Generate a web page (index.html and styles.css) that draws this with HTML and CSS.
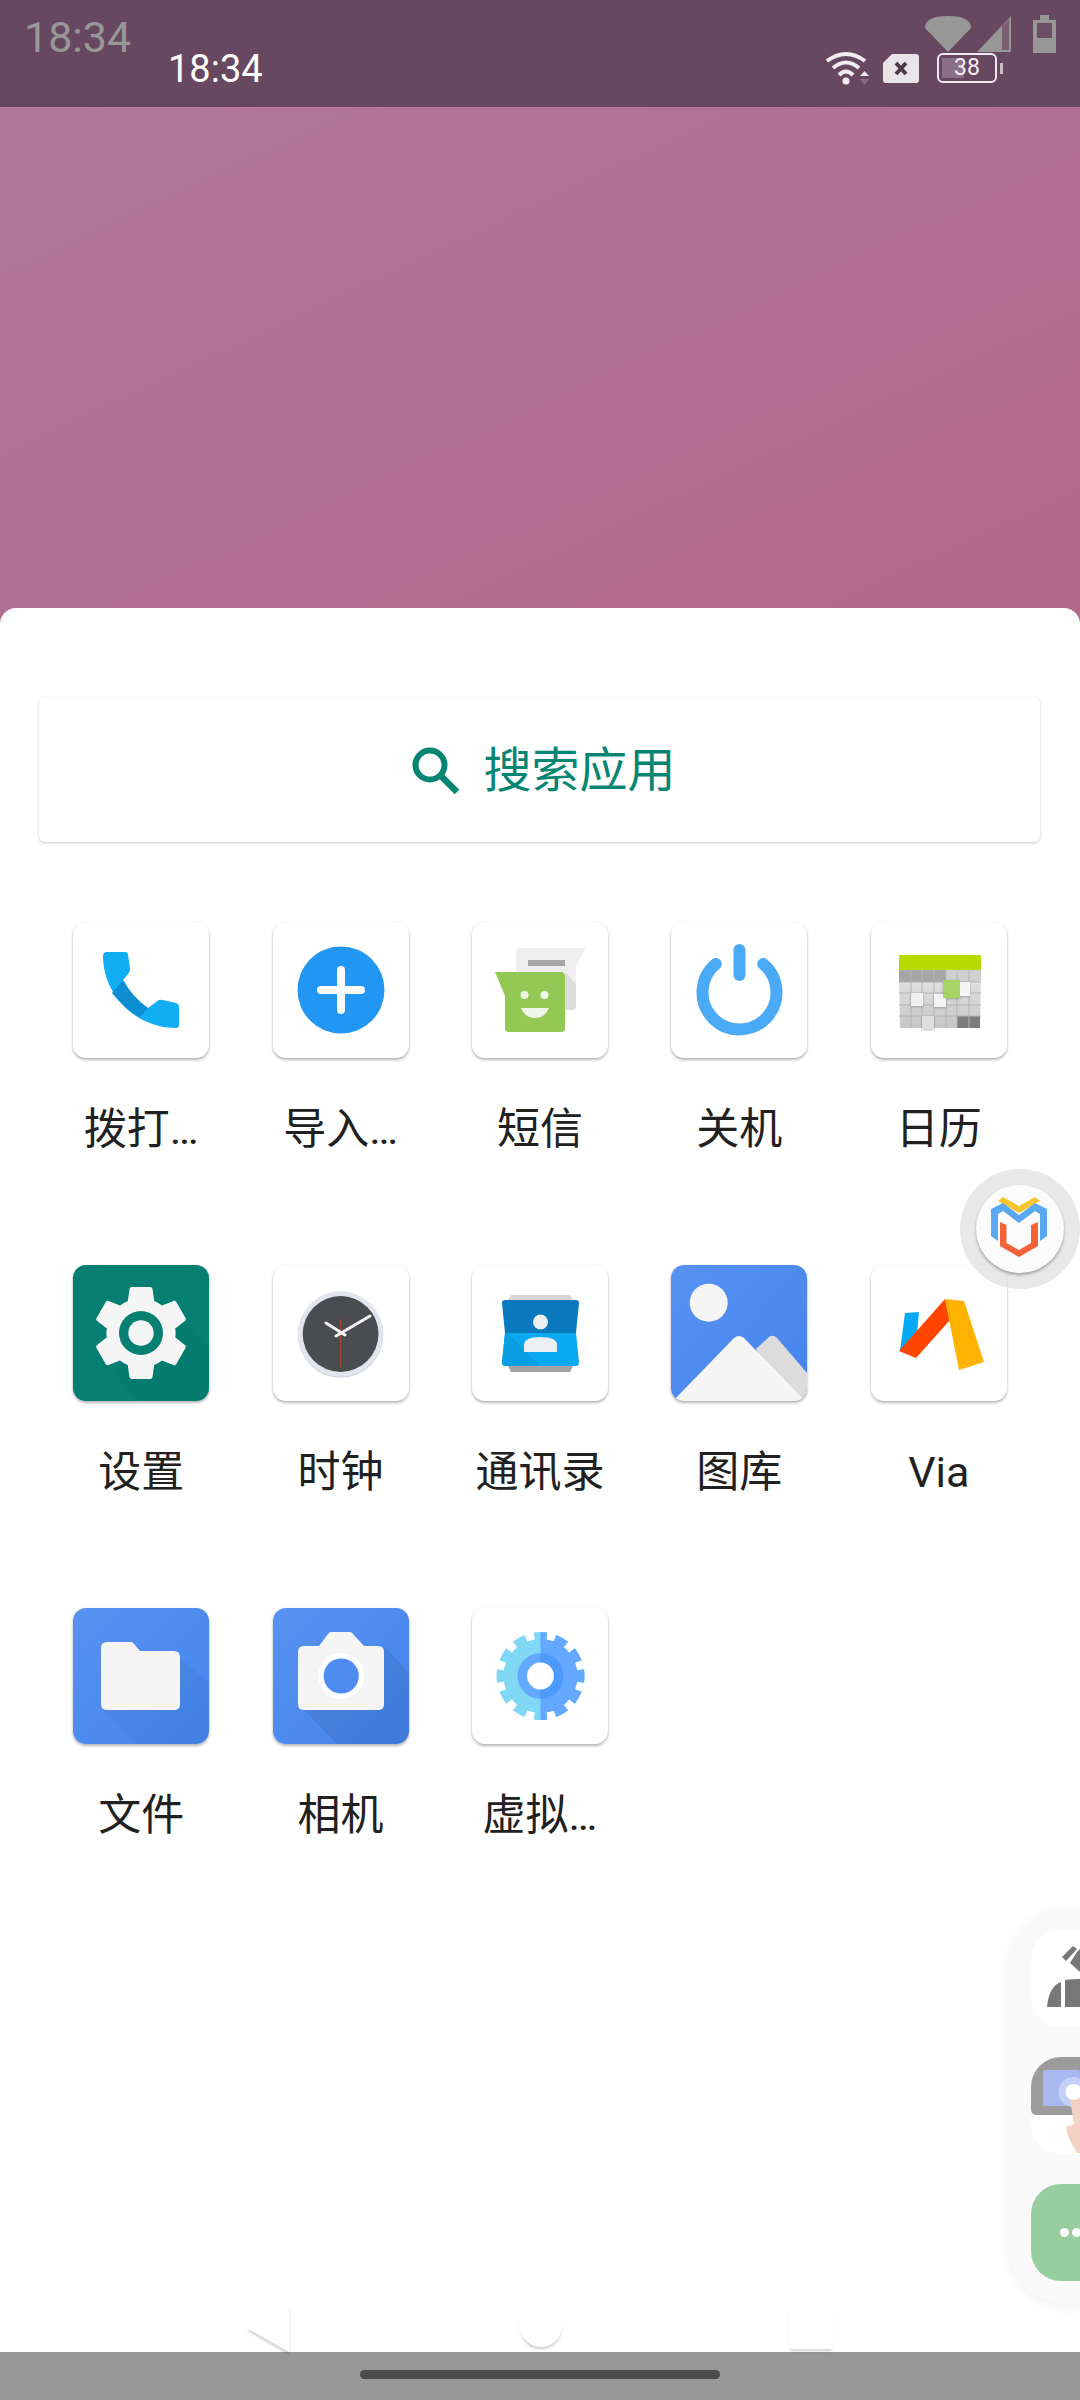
FILE: index.html
```html
<!DOCTYPE html>
<html lang="zh-CN">
<head>
  <meta charset="UTF-8" />
  <meta name="viewport" content="width=device-width, initial-scale=1.0"/>
  <title>搜索应用</title>
  <link rel="stylesheet" href="styles.css">
</head>
<body>
  <div class="screen">

    <div class="status-bar">
      <span class="time">18:34</span>
      <div class="status-icons">
        <svg class="wifi-icon" width="44" height="34" viewBox="0 0 44 34">
          <g fill="none" stroke="#f2ecf0" stroke-width="4">
            <path d="M2 10 Q21 -4 40 10"/>
            <path d="M8 17 Q21 6 34 17"/>
            <path d="M14 24 Q21 17 28 24"/>
          </g>
          <circle cx="21" cy="30" r="3.5" fill="#f2ecf0"/>
          <path d="M35 25 L39.500 20 L44 25Z" fill="#f2ecf0"/>
          <path d="M35 28 H44 L39.500 34Z" fill="#8c6c84"/>
        </svg>
        <svg class="sim-icon" width="36" height="29" viewBox="0 0 36 29">
          <path d="M9 0 H33 Q36 0 36 3 V26 Q36 29 33 29 H3 Q0 29 0 26 V9Z" fill="#e9e4e8"/>
          <path d="M13 9 L23 20 M23 9 L13 20" stroke="#4c3a48" stroke-width="4"/>
        </svg>
        <div class="battery">
          <div class="battery-level"></div>
          <span class="battery-text">38</span>
        </div>
        <div class="battery-nub"></div>
      </div>

      <!-- the second, greyed status bar that shows through -->
      <div class="ghost-status">
        <span class="ghost-time">18:34</span>
        <svg width="132" height="40" viewBox="0 0 132 40">
          <path d="M24 37 L1 13 Q1 1 24 1 Q47 1 47 13Z" fill="#979797"/>
          <path d="M53 37 L87 1 V37Z" fill="#979797"/>
          <path d="M78 35 V11 L85 4 V35Z" fill="#7a5f72"/>
          <path d="M116 0 H125 V5 H132 V38 H109 V5 H116Z" fill="#979797"/>
          <rect x="113" y="8" width="15" height="15" fill="#6c4e64"/>
        </svg>
      </div>
    </div>

    <div class="wallpaper"></div>

    <div class="sheet">
      <div class="search-box">
        <svg width="48" height="48" viewBox="0 0 48 48">
          <circle cx="18" cy="18" r="14.500" fill="none" stroke="#078573" stroke-width="6"/>
          <path d="M28 28 L45 45" stroke="#078573" stroke-width="6.500"/>
        </svg>
        <span class="search-text">搜索应用</span>
      </div>

      <div class="app-grid">

        <div class="app">
          <div class="tile">
            <svg width="136" height="136" viewBox="0 0 136 136">
              <path d="M34 30 H52 Q55 30 55 33 L57 46 Q57.500 49 55 52 L50 58 Q60 76 75 86 L83 80 Q86 77 90 78 L103 81 Q106 82 106 85 V103 Q106 106 103 106 C62 106 30 72 30 34 Q30 30 34 30Z" fill="#12aef5"/>
              <path d="M50 58 L39 71 C48 82 57 90 67 95 L75 86 Q60 76 50 58Z" fill="#0d8ed2"/>
            </svg>
          </div>
          <span class="app-name">拨打…</span>
        </div>

        <div class="app">
          <div class="tile">
            <svg width="136" height="136" viewBox="0 0 136 136">
              <circle cx="68" cy="68" r="43.500" fill="#2196f3"/>
              <path d="M48 68 H88 M68 48 V88" stroke="#fafafa" stroke-width="8" stroke-linecap="round"/>
            </svg>
          </div>
          <span class="app-name">导入…</span>
        </div>

        <div class="app">
          <div class="tile">
            <svg width="136" height="136" viewBox="0 0 136 136">
              <path d="M48 26 H114 L104 44 V84 Q104 88 100 88 H93 V50 H44 V30 Q44 26 48 26Z" fill="#eeeeee"/>
              <path d="M93 50 L104 62 V84 Q104 88 100 88 H93Z" fill="#dcdcdc"/>
              <rect x="56" y="38" width="37" height="6" fill="#a8a8a8"/>
              <path d="M23 50 H89 Q93 50 93 54 V107 Q93 110 89 110 H37 Q33 110 33 107 V74Z" fill="#94c854"/>
              <circle cx="52.500" cy="73" r="4" fill="#f1f5e8"/>
              <circle cx="72.500" cy="73" r="4" fill="#f1f5e8"/>
              <path d="M49 86 H77 Q73 96 63 96 Q53 96 49 86Z" fill="#f1f5e8"/>
            </svg>
          </div>
          <span class="app-name">短信</span>
        </div>

        <div class="app">
          <div class="tile">
            <svg width="136" height="136" viewBox="0 0 136 136">
              <path d="M44.800 42 A37 37 0 1 0 92.200 42" fill="none" stroke="#4baaf5" stroke-width="12" stroke-linecap="round"/>
              <path d="M68.500 28 V53" stroke="#4baaf5" stroke-width="12" stroke-linecap="round"/>
            </svg>
          </div>
          <span class="app-name">关机</span>
        </div>

        <div class="app">
          <div class="tile">
            <svg width="136" height="136" viewBox="0 0 136 136">
              <defs>
                <linearGradient id="cal-grid" x1="0" y1="0" x2="0" y2="1">
                  <stop offset="0" stop-color="#e6e6e6"/>
                  <stop offset="1" stop-color="#c6c6c6"/>
                </linearGradient>
              </defs>
              <path d="M29 33 H109 Q110 33 110 35 V48 H28 V35 Q28 33 29 33Z" fill="#b6d900"/>
              <path d="M28 48 H110 L109 106 H29Z" fill="url(#cal-grid)"/>
              <rect x="28" y="48" width="47" height="12" fill="#a6a6a6"/>
              <rect x="75" y="48" width="35" height="12" fill="#cfcfcf"/>
              <rect x="86" y="94" width="23" height="12" fill="#7c7c7c"/>
              <path d="M40 48 V106 M51 48 V106 M63 48 V106 M75 48 V106 M86 48 V106 M98 48 V106 M28 60 H110 M28 71 H110 M28 83 H110 M28 94 H110" stroke="#b4b4b4" stroke-width="1"/>
              <g class="cal-block">
                <rect x="40" y="71" width="12" height="13" fill="#f0f0f0"/>
                <rect x="63" y="72" width="12" height="13" fill="#f2f2f2"/>
                <rect x="51" y="94" width="12" height="13" fill="#dedede"/>
                <rect x="89" y="60" width="10" height="14" fill="#f5f5f5"/>
                <rect x="72" y="58" width="17" height="18" fill="#a6d566"/>
              </g>
            </svg>
          </div>
          <span class="app-name">日历</span>
        </div>

        <div class="app">
          <div class="tile tile-teal">
            <svg width="136" height="136" viewBox="0 0 136 136">
              <path d="M105 50 L136 84 V136 H66 L40 108Z" fill="#000" fill-opacity="0.025"/>
              <g transform="translate(68 68) scale(4.800) translate(-12 -12)">
                <path d="M19.140 12.940c.04-.3.06-.61.06-.94 0-.32-.02-.64-.07-.94l2.030-1.580c.18-.14.23-.41.12-.61l-1.920-3.320c-.12-.22-.37-.29-.59-.22l-2.390.96c-.5-.38-1.030-.7-1.620-.94l-.36-2.540c-.04-.24-.24-.41-.48-.41h-3.840c-.24 0-.43.17-.47.41l-.36 2.540c-.59.24-1.130.57-1.620.94l-2.390-.96c-.22-.08-.47 0-.59.22L2.740 8.870c-.12.21-.08.47.12.61l2.030 1.580c-.05.3-.09.63-.09.94s.02.64.07.94l-2.030 1.580c-.18.14-.23.41-.12.61l1.920 3.320c.12.22.37.29.59.22l2.390-.96c.5.38 1.030.7 1.620.94l.36 2.540c.05.24.24.41.48.41h3.840c.24 0 .44-.17.47-.41l.36-2.540c.59-.24 1.130-.56 1.620-.94l2.390.96c.22.08.47 0 .59-.22l1.920-3.320c.12-.22.07-.47-.12-.61l-2.010-1.580z" fill="#f5f5f5"/>
              </g>
              <circle cx="68" cy="68" r="22" fill="#047f72"/>
              <circle cx="68" cy="68" r="12.700" fill="#f5f5f5"/>
            </svg>
          </div>
          <span class="app-name">设置</span>
        </div>

        <div class="app">
          <div class="tile">
            <svg width="136" height="136" viewBox="0 0 136 136">
              <circle cx="67.600" cy="70" r="42.700" fill="#cfd2da"/>
              <circle cx="67.600" cy="69" r="42.700" fill="#e2e5ee"/>
              <circle cx="67.600" cy="69" r="37.900" fill="#4a4c50"/>
              <path d="M67.600 54 V102" stroke="#a0472f" stroke-width="1.500"/>
              <path d="M63 71 L97 51" stroke="#f5f5f5" stroke-width="3" stroke-linecap="round"/>
              <path d="M72 70 L53 58" stroke="#f5f5f5" stroke-width="3" stroke-linecap="round"/>
            </svg>
          </div>
          <span class="app-name">时钟</span>
        </div>

        <div class="app">
          <div class="tile">
            <svg width="136" height="136" viewBox="0 0 136 136">
              <path d="M36 35 L39 30 H98 L101 35 V102 L98 107 H39 L36 102Z" fill="#d6d6d6"/>
              <path d="M36 100 H101 L98 107 H39Z" fill="#a2a2a2"/>
              <path d="M33 35 H104 Q107 35 107 38 L104 68 H33 L30 38 Q30 35 33 35Z" fill="#0a78bd"/>
              <path d="M33 68 H104 L107 97 Q107 101 104 101 H33 Q30 101 30 97Z" fill="#0aa9f2"/>
              <path d="M33 68 H36 L68 101 H33 Q30 101 30 97Z" fill="#0a9fe3"/>
              <ellipse cx="68.500" cy="57" rx="7.500" ry="7.500" fill="#eceff1"/>
              <path d="M52 87 V80 Q52 72 68.500 72 Q85 72 85 80 V87Z" fill="#eceff1"/>
            </svg>
          </div>
          <span class="app-name">通讯录</span>
        </div>

        <div class="app">
          <div class="tile tile-blue">
            <svg width="136" height="136" viewBox="0 0 136 136">
              <circle cx="37.700" cy="37.700" r="19" fill="#f5f5f5"/>
              <path d="M85 84 L98 72 Q102 69 106 73 L136 108 V136 H110Z" fill="#dcdcdc"/>
              <path d="M2 136 L63 73 Q68 69 73 73 L134 136Z" fill="#f5f5f5"/>
            </svg>
          </div>
          <span class="app-name">图库</span>
        </div>

        <div class="app">
          <div class="tile">
            <svg width="136" height="136" viewBox="0 0 136 136">
              <path d="M34 48 L48 47 L46 68 L29 86Z" fill="#03a9f4"/>
              <path d="M74 34 L79 55 L45 93 L28 86Z" fill="#ff4500"/>
              <path d="M74 34 L93 36 L113 97 L88 105Z" fill="#ffb300"/>
            </svg>
          </div>
          <span class="app-name">Via</span>
        </div>

        <div class="app">
          <div class="tile tile-blue">
            <svg width="136" height="136" viewBox="0 0 136 136">
              <path d="M107 49 L136 76 V136 H64 L30 102 H107Z" fill="#000" fill-opacity="0.035"/>
              <path d="M34 34 H58 Q60 34 61 36 L67 43 H101 Q107 43 107 49 V96 Q107 102 101 102 H34 Q28 102 28 96 V40 Q28 34 34 34Z" fill="#f5f5f5"/>
            </svg>
          </div>
          <span class="app-name">文件</span>
        </div>

        <div class="app">
          <div class="tile tile-blue">
            <svg width="136" height="136" viewBox="0 0 136 136">
              <path d="M111 38 L136 65 V136 H64 L31 102 H111Z" fill="#000" fill-opacity="0.08"/>
              <path d="M31 38 H46 L55 26 Q56 24 58 24 H77 Q79 24 80 26 L91 38 H105 Q111 38 111 44 V96 Q111 102 105 102 H31 Q25 102 25 96 V44 Q25 38 31 38Z" fill="#f5f5f5"/>
              <circle cx="68.200" cy="68" r="23" fill="#ffffff"/>
              <circle cx="68.200" cy="68" r="17.600" fill="#4f8cf2"/>
            </svg>
          </div>
          <span class="app-name">相机</span>
        </div>

        <div class="app">
          <div class="tile">
            <svg width="136" height="136" viewBox="0 0 136 136">
              <defs>
                <clipPath id="gear-right"><rect x="68.500" y="0" width="68" height="136"/></clipPath>
              </defs>
              <g>
                <circle cx="68.500" cy="68" r="37" fill="#80d8f5"/>
                <circle cx="68.500" cy="68" r="39" fill="none" stroke="#80d8f5" stroke-width="10" pathLength="240" stroke-dasharray="12 8" stroke-dashoffset="6"/>
              </g>
              <g clip-path="url(#gear-right)">
                <circle cx="68.500" cy="68" r="37" fill="#64a8ff"/>
                <circle cx="68.500" cy="68" r="39" fill="none" stroke="#64a8ff" stroke-width="10" pathLength="240" stroke-dasharray="12 8" stroke-dashoffset="6"/>
              </g>
              <circle cx="68.500" cy="68" r="23" fill="#64a8ff"/>
              <circle cx="68.500" cy="68" r="23" fill="#4d9aff" clip-path="url(#gear-right)"/>
              <circle cx="68.500" cy="68" r="13.400" fill="#fff"/>
            </svg>
          </div>
          <span class="app-name">虚拟…</span>
        </div>

      </div>

      <div class="nav-keys">
        <svg class="key-back" width="50" height="52" viewBox="0 0 50 52">
          <path d="M44 0 V47 L2 23Z" fill="#fff"/>
        </svg>
        <div class="key-home"></div>
        <div class="key-recent"></div>
      </div>
    </div>

    <div class="gesture-bar">
      <div class="gesture-pill"></div>
    </div>

    <!-- floating ball -->
    <div class="float-ball">
      <div class="float-ball-inner">
        <svg width="88" height="88" viewBox="0 0 88 88">
          <path d="M22 16 L27 12 L43 21 L59 12 L64 16 L43 28Z" fill="#f6c632"/>
          <path d="M15 24 L27 18 L43 30 L59 18 L71 24 V51 L64 56 V29 L59 26 L43 38 L27 26 L22 29 V56 L15 51Z" fill="#5aa7f2"/>
          <path d="M24 37 L30.500 40 V58 L43 65 L55 58 V40 L62 37 V61 L43 72 L24 61Z" fill="#f4623a"/>
        </svg>
      </div>
    </div>

    <!-- side toolbar, runs off the right edge -->
    <div class="side-panel">
      <div class="side-item">
        <svg width="49" height="97" viewBox="0 0 49 97">
          <path d="M31 27 L42 16 L46 19 L35 31Z" fill="#787878"/>
          <path d="M46 22 L49 19 V42 L39 33Z" fill="#787878"/>
          <path d="M16 77 Q18 56 30 52 V77Z" fill="#787878"/>
          <path d="M34 50 Q40 49 49 49 V77 H34Z" fill="#787878"/>
        </svg>
      </div>
      <div class="side-item">
        <svg width="49" height="97" viewBox="0 0 49 97">
          <path d="M15 0 H49 V58 H6 Q0 58 0 52 V15 Q0 0 15 0Z" fill="#9c9c9c"/>
          <rect x="12" y="13" width="37" height="36" rx="2" fill="#a9b8f0"/>
          <circle cx="42.500" cy="35" r="15" fill="#c4d0f6"/>
          <path d="M38 36 Q42 29 47 35 L49 38 V96 H46 Q36 80 35 70 L43 67Z" fill="#f3d2c4"/>
          <circle cx="42.500" cy="35" r="8" fill="#ffffff"/>
        </svg>
      </div>
      <div class="side-item side-more">
        <i class="dot"></i>
        <i class="dot"></i>
      </div>
    </div>

  </div>
</body>
</html>
```

FILE: styles.css
```css
body {
  margin: 0;
  font-family: Roboto, "Noto Sans CJK SC", sans-serif;
  background: #fff;
}

.screen {
  width: 1080px;
  height: 2400px;
  position: relative;
  overflow: hidden;
  display: flex;
  flex-direction: column;
}

/* status bar */
.status-bar {
  height: 107px;
  background: #684860;
  position: relative;
  display: flex;
  justify-content: space-between;
  align-items: flex-start;
  padding: 50px 77px 0 168px;
  box-sizing: border-box;
  flex-shrink: 0;
}

.time {
  color: #fff;
  font-size: 38px;
  line-height: 38px;
}

.status-icons {
  display: flex;
  align-items: center;
  height: 34px;
  margin-top: 1px;
}

.wifi-icon {
  display: block;
}

.sim-icon {
  margin-left: 14px;
}

.battery {
  width: 60px;
  height: 30px;
  margin-left: 18px;
  border: 2px solid #f0eaee;
  border-radius: 6px;
  box-sizing: border-box;
  position: relative;
  display: flex;
  align-items: center;
  justify-content: center;
}

.battery-level {
  position: absolute;
  left: 3px;
  top: 3px;
  bottom: 3px;
  width: 22px;
  background: #8a6f85;
}

.battery-text {
  position: relative;
  color: #f4eff2;
  font-size: 23px;
  line-height: 26px;
}

.battery-nub {
  width: 3px;
  height: 11px;
  margin-left: 3px;
  background: #c9bac5;
}

.ghost-status {
  position: absolute;
  left: 24px;
  right: 24px;
  top: 15px;
  display: flex;
  justify-content: space-between;
  align-items: flex-start;
}

.ghost-time {
  color: #979797;
  font-size: 43px;
  line-height: 44px;
}

/* wallpaper and sheet */
.wallpaper {
  height: 521px;
  flex-shrink: 0;
  background: linear-gradient(155deg, #b0779b, #b3688c);
}

.sheet {
  flex: 1;
  background: #fff;
  border-radius: 16px 16px 0 0;
  margin-top: -20px;
  padding-top: 89px;
  display: flex;
  flex-direction: column;
  position: relative;
}

.search-box {
  height: 145px;
  margin: 0 40px 0 39px;
  padding: 3px 0 0 9px;
  box-sizing: border-box;
  border-radius: 6px;
  box-shadow: 0 1px 3px rgba(0, 0, 0, 0.22);
  display: flex;
  align-items: center;
  justify-content: center;
  gap: 23px;
}

.search-text {
  color: #078573;
  font-size: 48px;
  line-height: 60px;
}

.app-grid {
  display: grid;
  grid-template-columns: repeat(5, 199.4px);
  grid-auto-rows: 343px;
  padding-left: 41.5px;
  margin-top: 80px;
}

.app {
  display: flex;
  flex-direction: column;
  align-items: center;
}

.tile {
  width: 136px;
  height: 136px;
  background: #fff;
  border-radius: 13px;
  overflow: hidden;
  box-shadow: 0 2px 3px rgba(0, 0, 0, 0.28), 0 0 2px rgba(0, 0, 0, 0.08);
}

.tile svg {
  display: block;
}

.tile-teal {
  background: #047f72;
}

.tile-blue {
  background: linear-gradient(135deg, #5892f2, #4484ed);
}

.cal-block {
  filter: drop-shadow(0 1px 1px rgba(0, 0, 0, 0.25));
}

.app-name {
  margin-top: 43px;
  color: #212121;
  font-size: 43px;
  line-height: 56px;
  white-space: nowrap;
}

/* faded nav keys above the gesture bar */
.nav-keys {
  margin-top: auto;
  height: 47px;
  display: flex;
  padding-left: 245px;
}

.key-back {
  display: block;
  filter: drop-shadow(0 3px 1px rgba(0, 0, 0, 0.16));
}

.key-home {
  width: 42px;
  height: 42px;
  margin-left: 225px;
  border-radius: 50%;
  box-shadow: 0 3px 3px -1px rgba(0, 0, 0, 0.22);
}

.key-recent {
  width: 44px;
  height: 44px;
  margin-left: 227px;
  border-radius: 3px;
  box-shadow: 0 3px 3px -1px rgba(0, 0, 0, 0.18);
}

.gesture-bar {
  height: 48px;
  flex-shrink: 0;
  background: #989898;
  display: flex;
  justify-content: center;
  padding-top: 18px;
  box-sizing: border-box;
}

.gesture-pill {
  width: 360px;
  height: 9px;
  border-radius: 5px;
  background: #4b4b4b;
}

/* floating ball */
.float-ball {
  position: absolute;
  left: 960px;
  top: 1169px;
  width: 120px;
  height: 120px;
  border-radius: 50%;
  background: rgba(226, 226, 226, 0.8);
  display: flex;
  align-items: center;
  justify-content: center;
}

.float-ball-inner {
  width: 88px;
  height: 88px;
  border-radius: 50%;
  background: #fcfcfc;
  box-shadow: 0 2px 3px rgba(0, 0, 0, 0.3);
}

.float-ball-inner svg {
  display: block;
}

/* side toolbar */
.side-panel {
  position: absolute;
  left: 1008px;
  top: 1907px;
  width: 120px;
  height: 397px;
  box-sizing: border-box;
  padding: 23px 0 0 23px;
  background: #fafafa;
  border-radius: 60px;
  box-shadow: 0 4px 14px rgba(0, 0, 0, 0.05);
  display: flex;
  flex-direction: column;
  gap: 30px;
}

.side-item {
  width: 97px;
  height: 97px;
  background: #fff;
  border-radius: 30px;
  overflow: hidden;
}

.side-item svg {
  display: block;
}

.side-more {
  background: #98ce9f;
  display: flex;
  align-items: center;
  gap: 3px;
  padding-left: 29px;
  box-sizing: border-box;
}

.dot {
  width: 9px;
  height: 9px;
  border-radius: 50%;
  background: #fff;
  flex-shrink: 0;
}
```
